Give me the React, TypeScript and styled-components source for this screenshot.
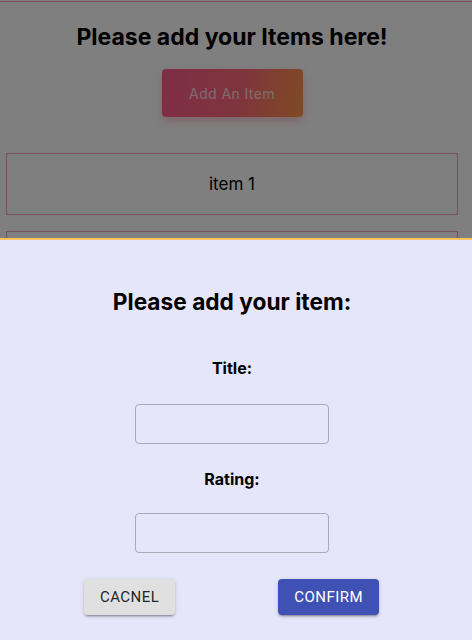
import React from "react";
import styled, { createGlobalStyle } from "styled-components";

const GlobalStyle = createGlobalStyle`
  html, body {
    margin: 0;
    padding: 0;
    background: #ffffff;
    font-family: Inter, "Noto Sans", sans-serif;
  }
  * { box-sizing: border-box; }
`;

const Page = styled.div`
  min-height: 640px;
  border-top: 1px solid #f4a0b8;
  margin-top: 1px;
  padding-right: 8px;
  display: flex;
  flex-direction: column;
  align-items: stretch;
`;

const PageTitle = styled.h1`
  margin: 20px 0 0;
  font-size: 23px;
  line-height: 30px;
  font-weight: 700;
  color: #000;
  text-align: center;
`;

const AddButton = styled.button`
  align-self: center;
  margin-top: 17px;
  width: 141px;
  height: 48px;
  border: none;
  border-radius: 4px;
  background: linear-gradient(100deg, #ff5a8c 0%, #ff6a7a 55%, #ff9448 100%);
  box-shadow: 0 4px 10px rgba(255, 90, 120, 0.35);
  color: rgba(255, 255, 255, 0.75);
  font-family: Inter, sans-serif;
  font-size: 14px;
  letter-spacing: 0.4px;
`;

const ItemList = styled.div`
  display: flex;
  flex-direction: column;
  gap: 16px;
  margin-top: 36px;
`;

const ItemCard = styled.div`
  margin: 0 6px;
  height: 62px;
  border: 1px solid #f0a0b8;
  display: flex;
  align-items: center;
  justify-content: center;
  font-size: 17px;
  color: #000;
`;

const Backdrop = styled.div`
  position: fixed;
  inset: 0;
  background: rgba(0, 0, 0, 0.5);
`;

const Modal = styled.div`
  position: fixed;
  left: 0;
  right: 0;
  top: 238px;
  bottom: 0;
  padding-right: 8px;
  background: #e6e6fa;
  border-top: 2px solid #f9c35e;
  display: flex;
  flex-direction: column;
  align-items: center;
`;

const ModalTitle = styled.h2`
  margin: 48px 0 0;
  font-size: 22.7px;
  line-height: 27px;
  font-weight: 700;
  color: #000;
`;

const Label = styled.label<{ $gap: number }>`
  margin-top: ${(p) => p.$gap}px;
  font-size: 16px;
  line-height: 20px;
  font-weight: 700;
  color: #000;
`;

const Input = styled.input<{ $gap: number }>`
  margin-top: ${(p) => p.$gap}px;
  width: 194px;
  height: 40px;
  border: 1px solid #a9a9b8;
  border-radius: 4px;
  background: transparent;
  outline: none;
`;

const ButtonRow = styled.div`
  align-self: stretch;
  margin-top: 26px;
  padding: 0 85px 0 84px;
  display: flex;
  justify-content: space-between;
`;

const MuiButton = styled.button<{ $primary?: boolean }>`
  height: 36px;
  padding: 6px 16px;
  border: none;
  border-radius: 4px;
  background: ${(p) => (p.$primary ? "#3f51b5" : "#e0e0e0")};
  color: ${(p) => (p.$primary ? "#ffffff" : "rgba(0,0,0,0.87)")};
  font-family: Roboto, "Liberation Sans", sans-serif;
  font-weight: 400;
  font-size: 15px;
  line-height: 24px;
  letter-spacing: 0.45px;
  text-transform: uppercase;
  box-shadow: 0 3px 1px -2px rgba(0,0,0,0.2), 0 2px 2px 0 rgba(0,0,0,0.14), 0 1px 5px 0 rgba(0,0,0,0.12);
`;

export default function App() {
  return (
    <>
      <GlobalStyle />
      <Page>
        <PageTitle>Please add your Items here!</PageTitle>
        <AddButton>Add An Item</AddButton>
        <ItemList>
          <ItemCard>item 1</ItemCard>
          <ItemCard>item 2</ItemCard>
        </ItemList>
      </Page>
      <Backdrop />
      <Modal>
        <ModalTitle>Please add your item:</ModalTitle>
        <Label $gap={43}>Title:</Label>
        <Input $gap={26} />
        <Label $gap={25}>Rating:</Label>
        <Input $gap={24} />
        <ButtonRow>
          <MuiButton>Cacnel</MuiButton>
          <MuiButton $primary>Confirm</MuiButton>
        </ButtonRow>
      </Modal>
    </>
  );
}
